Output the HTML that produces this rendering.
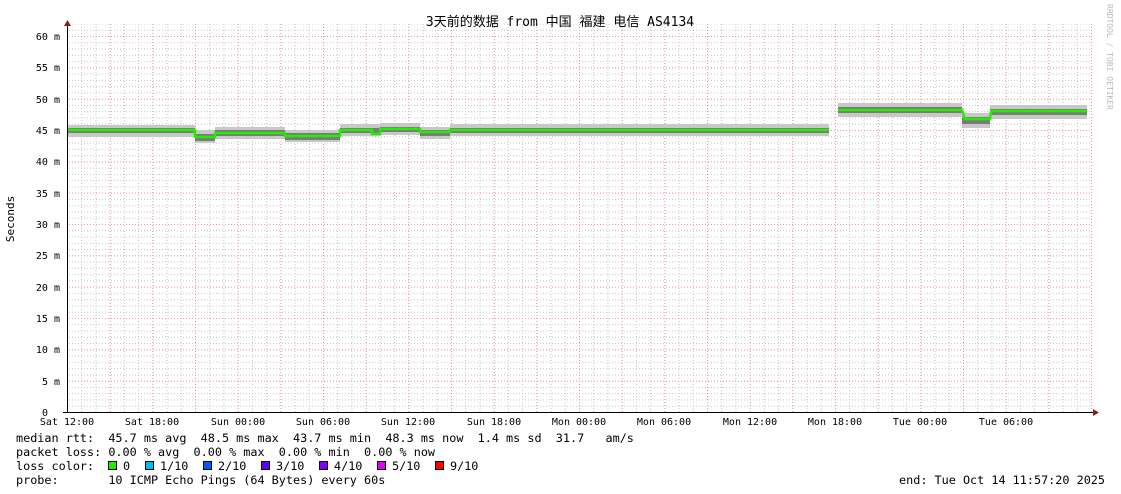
<!DOCTYPE html>
<html><head><meta charset="utf-8"><style>
html,body{margin:0;padding:0;background:#fff;}
svg{display:block;}
text{font-family:"DejaVu Sans Mono","Liberation Mono","Noto Sans CJK SC",monospace;font-size:11.8px;fill:#000;white-space:pre;}
.s{font-size:10px;}
</style></head><body>
<svg width="1121" height="494" viewBox="0 0 1121 494" xmlns="http://www.w3.org/2000/svg">
<defs>
<pattern id="vg" x="67" y="0" width="14.222" height="3" patternUnits="userSpaceOnUse"><rect x="0" y="0" width="1" height="1" fill="#c4c4c4"/></pattern>
<pattern id="hg" x="0" y="412" width="3" height="6.2667" patternUnits="userSpaceOnUse"><rect x="0" y="0" width="1" height="1" fill="#c4c4c4"/></pattern>
<pattern id="vr" x="67" y="0" width="42.667" height="3" patternUnits="userSpaceOnUse"><rect x="0" y="0" width="1" height="1" fill="#f29a9a"/></pattern>
<pattern id="hr" x="0" y="412" width="3" height="31.333" patternUnits="userSpaceOnUse"><rect x="0" y="0" width="1" height="1" fill="#f29a9a"/></pattern>
</defs>
<rect x="67" y="24" width="1025" height="388" fill="url(#vg)"/>
<rect x="67" y="24" width="1025" height="388" fill="url(#hg)"/>
<rect x="67" y="24" width="1025" height="388" fill="url(#vr)"/>
<rect x="67" y="24" width="1025" height="388" fill="url(#hr)"/>
<g>
<g fill="#c8c8c8">
<rect x="67" y="125" width="128" height="12"/>
<rect x="195" y="130" width="20" height="13"/>
<rect x="215" y="127" width="70" height="12"/>
<rect x="285" y="130" width="55" height="12"/>
<rect x="340" y="124" width="40" height="12"/>
<rect x="380" y="123" width="40" height="12"/>
<rect x="420" y="127" width="30" height="12"/>
<rect x="450" y="124" width="379" height="12"/>
<rect x="838" y="103" width="124" height="14"/>
<rect x="962" y="113" width="28" height="15"/>
<rect x="990" y="105" width="97" height="14"/>
</g>
<g fill="#7a7a7a">
<rect x="67" y="128" width="128" height="5"/>
<rect x="195" y="134" width="20" height="7"/>
<rect x="215" y="130" width="70" height="6"/>
<rect x="285" y="133" width="55" height="7"/>
<rect x="340" y="128" width="40" height="5"/>
<rect x="380" y="127" width="40" height="5"/>
<rect x="420" y="130" width="30" height="6"/>
<rect x="450" y="128" width="379" height="5"/>
<rect x="838" y="107" width="124" height="6"/>
<rect x="962" y="117" width="28" height="7"/>
<rect x="990" y="109" width="97" height="6"/>
</g>
<polyline fill="none" stroke="#22ee00" stroke-width="2.5" points="67,130 195,130 195,137 215,137 215,133 285,133 285,136 340,136 340,130 372,130 372,134 380,134 380,129 420,129 420,132 450,132 450,130 829,130"/>
<polyline fill="none" stroke="#22ee00" stroke-width="2.5" points="838,110 962,110 965,119 990,119 991,111 1087,111"/>
</g>
<line x1="67.5" y1="24" x2="67.5" y2="412" stroke="#000"/>
<polygon points="64,26 71,26 67.5,20" fill="#802020"/>
<line x1="63" y1="412.5" x2="1094" y2="412.5" stroke="#000"/>
<polygon points="1093,409 1093,416 1099,412.5" fill="#802020"/>
<g>
<text class="s" x="60" y="40" text-anchor="end">60 m</text>
<text class="s" x="60" y="71" text-anchor="end">55 m</text>
<text class="s" x="60" y="103" text-anchor="end">50 m</text>
<text class="s" x="60" y="134" text-anchor="end">45 m</text>
<text class="s" x="60" y="165" text-anchor="end">40 m</text>
<text class="s" x="60" y="197" text-anchor="end">35 m</text>
<text class="s" x="60" y="228" text-anchor="end">30 m</text>
<text class="s" x="60" y="259" text-anchor="end">25 m</text>
<text class="s" x="60" y="291" text-anchor="end">20 m</text>
<text class="s" x="60" y="322" text-anchor="end">15 m</text>
<text class="s" x="60" y="353" text-anchor="end">10 m</text>
<text class="s" x="60" y="385" text-anchor="end">5 m</text>
<text class="s" x="48" y="416" text-anchor="end">0</text>
</g>
<text x="14" y="219" text-anchor="middle" transform="rotate(-90 14 219)" style="font-size:11px">Seconds</text>
<g>
<text class="s" x="67" y="425" text-anchor="middle">Sat 12:00</text>
<text class="s" x="152" y="425" text-anchor="middle">Sat 18:00</text>
<text class="s" x="238" y="425" text-anchor="middle">Sun 00:00</text>
<text class="s" x="323" y="425" text-anchor="middle">Sun 06:00</text>
<text class="s" x="408" y="425" text-anchor="middle">Sun 12:00</text>
<text class="s" x="494" y="425" text-anchor="middle">Sun 18:00</text>
<text class="s" x="579" y="425" text-anchor="middle">Mon 00:00</text>
<text class="s" x="664" y="425" text-anchor="middle">Mon 06:00</text>
<text class="s" x="750" y="425" text-anchor="middle">Mon 12:00</text>
<text class="s" x="835" y="425" text-anchor="middle">Mon 18:00</text>
<text class="s" x="920" y="425" text-anchor="middle">Tue 00:00</text>
<text class="s" x="1006" y="425" text-anchor="middle">Tue 06:00</text>
</g>
<text x="560" y="26" text-anchor="middle" style="font-size:13px">3天前的数据 from 中国 福建 电信 AS4134</text>
<text x="1107" y="4" transform="rotate(90 1107 4)" style="fill:#bbb;font-size:8px">RRDTOOL / TOBI OETIKER</text>
<text x="16" y="442">median rtt:  45.7 ms avg  48.5 ms max  43.7 ms min  48.3 ms now  1.4 ms sd  31.7   am/s</text>
<text x="16" y="456">packet loss: 0.00 % avg  0.00 % max  0.00 % min  0.00 % now</text>
<text x="16" y="470">loss color:  </text>
<rect x="108.5" y="461.5" width="8" height="8" fill="#22ee00" stroke="#000"/><text x="123" y="470">0</text>
<rect x="145.5" y="461.5" width="8" height="8" fill="#00b8ff" stroke="#000"/><text x="160" y="470">1/10</text>
<rect x="203.5" y="461.5" width="8" height="8" fill="#0059ff" stroke="#000"/><text x="218" y="470">2/10</text>
<rect x="261.5" y="461.5" width="8" height="8" fill="#5e00ff" stroke="#000"/><text x="276" y="470">3/10</text>
<rect x="319.5" y="461.5" width="8" height="8" fill="#7e00ff" stroke="#000"/><text x="334" y="470">4/10</text>
<rect x="377.5" y="461.5" width="8" height="8" fill="#dd00ff" stroke="#000"/><text x="392" y="470">5/10</text>
<rect x="435.5" y="461.5" width="8" height="8" fill="#ff0000" stroke="#000"/><text x="450" y="470">9/10</text>
<text x="16" y="484">probe:       10 ICMP Echo Pings (64 Bytes) every 60s</text>
<text x="1105" y="484" text-anchor="end">end: Tue Oct 14 11:57:20 2025</text>
</svg>
</body></html>
